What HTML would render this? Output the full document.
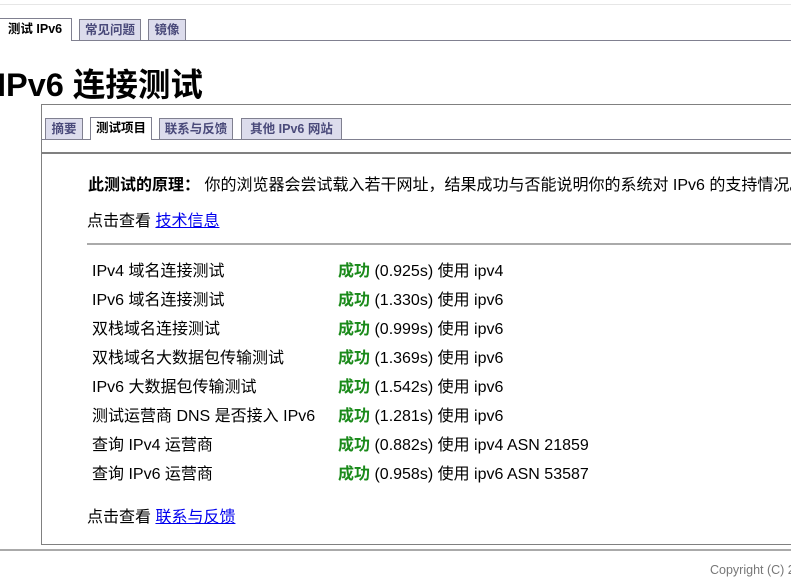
<!DOCTYPE html>
<html><head><meta charset="utf-8"><style>
body{margin:0;width:791px;height:577px;overflow:hidden;background:#fff;position:relative;font-family:"Liberation Sans","Noto Sans CJK SC",sans-serif;color:#000}
.a{position:absolute;white-space:nowrap}
.tab{position:absolute;height:21px;line-height:21px;font-size:12.5px;font-weight:bold;text-align:center;border:1px solid #808090;border-bottom:none;background:#dcdcec;color:#4a4a7a;box-sizing:border-box}
.tab.on{background:#fff;color:#000;height:23px}
.t{font-size:16px}
.ok{color:#1a8a1a;font-weight:bold}
a{color:#00e;text-decoration:underline}
</style></head><body>
<div class="a" style="left:0;top:4px;width:791px;height:1px;background:#e6e6e6"></div>
<div class="tab on" style="left:-2px;top:18px;width:74px">测试 IPv6</div>
<div class="tab" style="left:79px;top:19px;width:62px">常见问题</div>
<div class="tab" style="left:148px;top:19px;width:38px">镜像</div>
<div class="a" style="left:72px;top:40px;width:719px;height:1px;background:#808090"></div>
<div class="a" style="left:-3px;top:64px;font-size:32.5px;font-weight:bold;line-height:42px">IPv6 连接测试</div>
<div class="a" style="left:41px;top:104px;width:760px;height:439px;border:1px solid #808080;border-right:none"></div>
<div class="tab" style="left:45px;top:118px;width:38px">摘要</div>
<div class="tab on" style="left:90px;top:117px;width:62px">测试项目</div>
<div class="tab" style="left:159px;top:118px;width:74px">联系与反馈</div>
<div class="tab" style="left:241px;top:118px;width:101px">其他 IPv6 网站</div>
<div class="a" style="left:41px;top:139px;width:49px;height:1px;background:#808090"></div>
<div class="a" style="left:152px;top:139px;width:639px;height:1px;background:#808090"></div>
<div class="a" style="left:41px;top:152px;width:750px;height:2px;background:#808080"></div>
<div class="a t" style="left:88px;top:171px"><b>此测试的原理：</b> 你的浏览器会尝试载入若干网址，结果成功与否能说明你的系统对 IPv6 的支持情况。</div>
<div class="a t" style="left:87px;top:207px">点击查看 <a>技术信息</a></div>
<div class="a" style="left:87px;top:243px;width:704px;height:2px;background:#aaa"></div>
<div class="a t" style="left:92px;top:257px;line-height:29px">IPv4 域名连接测试<br>IPv6 域名连接测试<br>双栈域名连接测试<br>双栈域名大数据包传输测试<br>IPv6 大数据包传输测试<br>测试运营商 DNS 是否接入 IPv6<br>查询 IPv4 运营商<br>查询 IPv6 运营商</div>
<div class="a t" style="left:338px;top:257px;line-height:29px">
<span class="ok">成功</span> (0.925s) 使用 ipv4<br>
<span class="ok">成功</span> (1.330s) 使用 ipv6<br>
<span class="ok">成功</span> (0.999s) 使用 ipv6<br>
<span class="ok">成功</span> (1.369s) 使用 ipv6<br>
<span class="ok">成功</span> (1.542s) 使用 ipv6<br>
<span class="ok">成功</span> (1.281s) 使用 ipv6<br>
<span class="ok">成功</span> (0.882s) 使用 ipv4 ASN 21859<br>
<span class="ok">成功</span> (0.958s) 使用 ipv6 ASN 53587</div>
<div class="a t" style="left:87px;top:503px">点击查看 <a>联系与反馈</a></div>
<div class="a" style="left:0;top:549px;width:791px;height:2px;background:#aaa"></div>
<div class="a" style="left:710px;top:563px;font-size:12.5px;color:#777">Copyright (C) 2024</div>
</body></html>
